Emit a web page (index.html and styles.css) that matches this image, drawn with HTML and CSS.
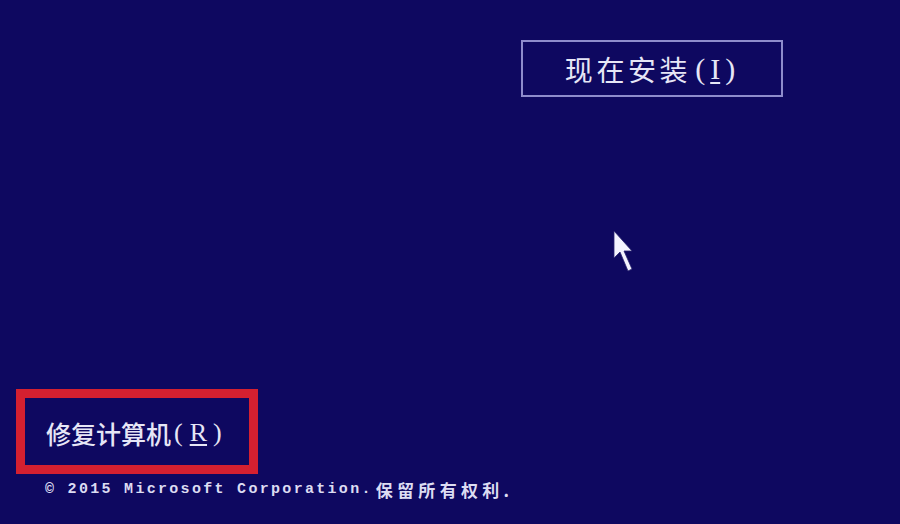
FILE: index.html
```html
<!DOCTYPE html>
<html lang="zh-CN">
<head>
<meta charset="utf-8">
<title>Windows 安装程序</title>
<link rel="stylesheet" href="styles.css">
</head>
<body>
<div class="screen">
  <div class="top">
    <div class="install-btn">
      <span class="cjk-big">现在安装</span><span class="key-big">(<u>I</u>)</span>
    </div>
  </div>
  <div class="spacer"></div>
  <div class="repair-box">
    <span class="cjk-mid">修复计算机</span><span class="key-mid">(<u>R</u>)</span>
  </div>
  <div class="copyright">
    <span class="latin">© 2015 Microsoft Corporation.</span><span class="cjk-small">保留所有权利.</span>
  </div>
  <svg class="cursor" width="22" height="44" viewBox="0 0 22 44">
    <path d="M1 1 V28 L7 22 L15 41 L19 39 L11 21 L19 21 Z" fill="#f4f4ff" stroke="#2a2470" stroke-width="0.8" stroke-linejoin="round"/>
  </svg>
</div>
</body>
</html>
```

FILE: styles.css
```css
html, body {
  margin: 0;
  padding: 0;
  background: #0e0860;
}
.screen {
  position: relative;
  width: 900px;
  height: 524px;
  display: flex;
  flex-direction: column;
  background: #0e0860;
  color: #e6e6f6;
  overflow: hidden;
}
.top {
  display: flex;
  justify-content: flex-end;
  padding: 40px 117px 0 0;
}
.install-btn {
  box-sizing: border-box;
  width: 262px;
  height: 57px;
  border: 2px solid #8e8ccc;
  display: flex;
  align-items: center;
  justify-content: center;
  padding-right: 4px;
}
.cjk-big {
  font-family: "Noto Sans CJK SC", sans-serif;
  font-size: 28px;
  letter-spacing: 3.6px;
  line-height: 1;
}
.key-big {
  font-family: "Liberation Serif", serif;
  font-size: 30px;
  line-height: 1;
  margin-left: 4px;
}
.key-big u {
  margin: 0 5px;
  text-decoration-thickness: 2px;
  text-underline-offset: 3px;
}
.spacer {
  flex: 1;
}
.repair-box {
  box-sizing: border-box;
  margin-left: 16px;
  width: 242px;
  height: 85px;
  border: 9px solid #d42030;
  display: flex;
  align-items: center;
  padding: 3px 0 0 21px;
}
.cjk-mid {
  font-family: "Noto Sans CJK SC", sans-serif;
  font-size: 25px;
  line-height: 1;
  font-weight: 500;
}
.key-mid {
  font-family: "Liberation Serif", serif;
  font-size: 26px;
  line-height: 1;
  margin-left: 3px;
}
.key-mid u {
  margin: 0 6px 0 7px;
  text-decoration-thickness: 2px;
  text-underline-offset: 3px;
}
.copyright {
  height: 30px;
  margin: 0 0 20px 0;
  padding-left: 45px;
  display: flex;
  align-items: center;
  white-space: pre;
  color: #dcdcf2;
}
.latin {
  font-family: "Liberation Mono", monospace;
  font-weight: bold;
  font-size: 15px;
  letter-spacing: 2.3px;
}
.cjk-small {
  font-family: "Noto Sans CJK SC", sans-serif;
  font-weight: bold;
  font-size: 17px;
  letter-spacing: 4.3px;
  margin-left: 3px;
}
.cursor {
  position: absolute;
  left: 613px;
  top: 230px;
}
```
